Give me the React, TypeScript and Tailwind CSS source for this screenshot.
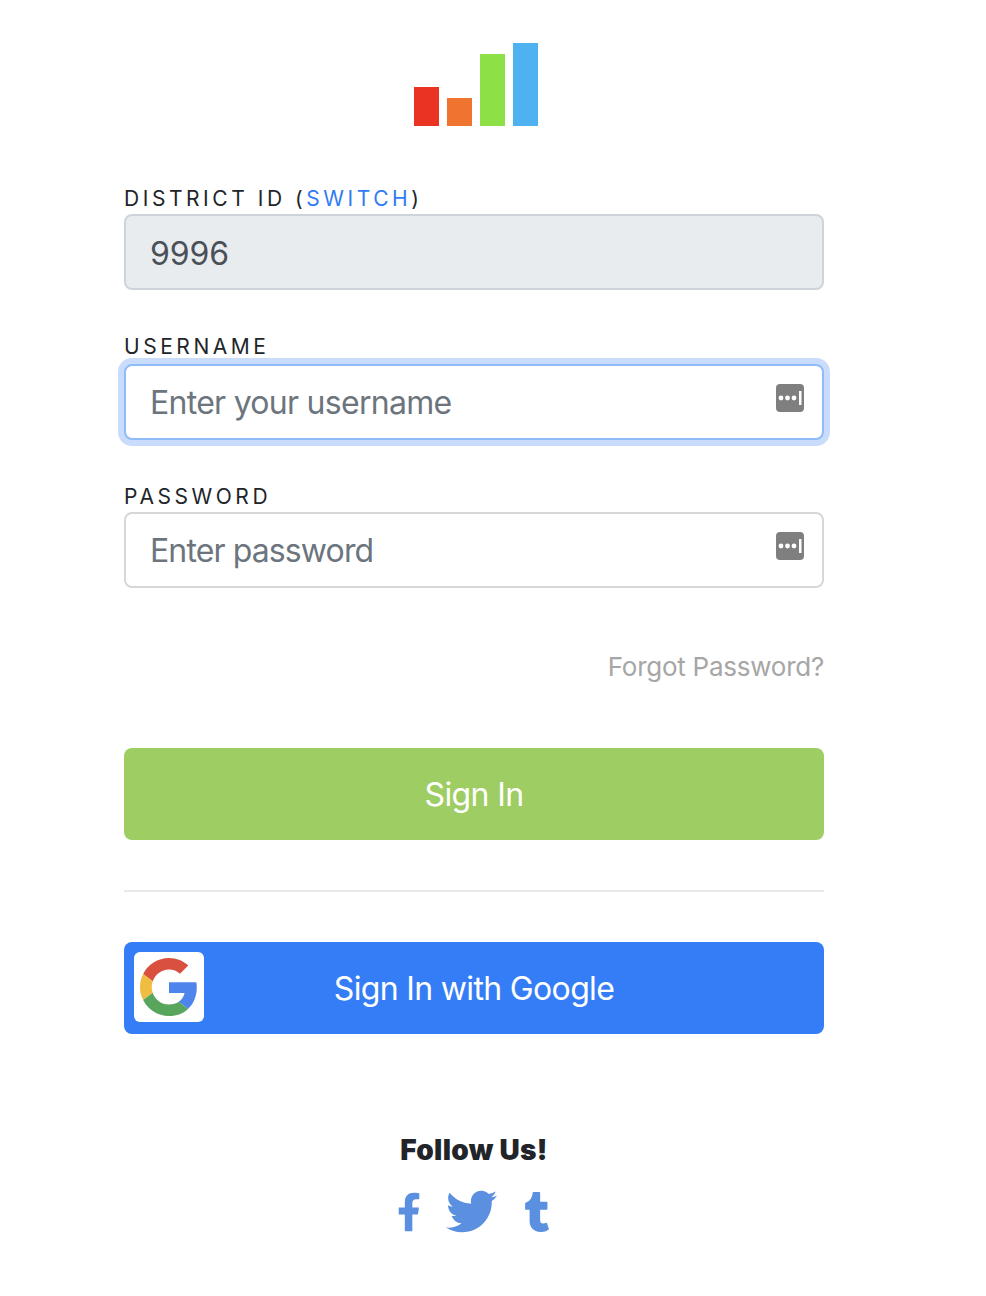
import React from "react";
import { FaFacebookF, FaTwitter, FaTumblr } from "react-icons/fa";

const font = { fontFamily: "Inter, sans-serif" };

function KeyIcon() {
  return (
    <svg width="28" height="28" viewBox="0 0 28 28" className="absolute right-[20px] top-[20px]">
      <rect width="28" height="28" rx="4" fill="#7f7f7f" />
      <circle cx="5" cy="14" r="2.4" fill="#fff" />
      <circle cx="11.500" cy="14" r="2.4" fill="#fff" />
      <circle cx="18" cy="14" r="2.4" fill="#fff" />
      <rect x="23" y="7" width="2.500" height="14" fill="#fff" />
    </svg>
  );
}

function GoogleG() {
  return (
    <svg width="58" height="58" viewBox="0 0 48 48">
      <path fill="#D9503F" d="M24 9.500c3.500 0 6.700 1.300 9.100 3.500l6.800-6.800C35.800 2.400 30.300 0 24 0 14.600 0 6.500 5.400 2.600 13.200l7.900 6.100C12.400 13.700 17.700 9.500 24 9.500z" />
      <path fill="#4F84EC" d="M47 24.500c0-1.600-.1-3.100-.4-4.500H24v9h12.900c-.6 3-2.300 5.500-4.800 7.200l7.700 6C44.300 38 47 31.800 47 24.500z" />
      <path fill="#F0BC42" d="M10.500 28.700c-.5-1.400-.8-3-.8-4.700s.3-3.300.8-4.700l-7.900-6.100C.9 16.500 0 20.100 0 24s.9 7.500 2.600 10.800l7.900-6.100z" />
      <path fill="#58A55C" d="M24 48c6.500 0 11.900-2.100 15.800-5.800l-7.700-6c-2.100 1.400-4.900 2.300-8.100 2.300-6.300 0-11.600-4.200-13.500-9.800l-7.900 6.100C6.500 42.600 14.600 48 24 48z" />
    </svg>
  );
}

const labelCls = "block text-[21px] leading-[24px] tracking-[3.55px] text-[#212529]";
const inputCls =
  "block w-full h-[76px] rounded-[8px] border-2 pl-[24px] pr-[24px] text-[32px] outline-none placeholder:text-[#6c757d]";

export default function App() {
  return (
    <div className="h-[1296px] w-[986px] bg-white overflow-hidden" style={font}>
      <div className="ml-[124px] w-[700px] flex flex-col">
        <div className="mt-[43px] h-[83px] flex items-end justify-center gap-[8px] pl-[4px] blur-[0.6px]">
          <div className="w-[25px] h-[39px] bg-[#ea3322]" />
          <div className="w-[25px] h-[28px] bg-[#ef7430]" />
          <div className="w-[25px] h-[72px] bg-[#8ee047]" />
          <div className="w-[25px] h-[83px] bg-[#4fb2f0]" />
        </div>

        <label className={`${labelCls} mt-[61px] mb-[3px]`}>
          DISTRICT ID (<span className="text-[#2f7bf6]">SWITCH</span>)
        </label>
        <input
          readOnly
          value="9996"
          className={`${inputCls} pt-[2px] tracking-[-0.1px] bg-[#e9ecef] border-[#ced4da] text-[#495057]`}
        />

        <label className={`${labelCls} mt-[45px] mb-[5px]`}>USERNAME</label>
        <div className="relative">
          <input
            placeholder="Enter your username"
            className={`${inputCls} pt-[1px] tracking-[-0.72px] bg-white border-[#8fbbf8] shadow-[0_0_0_6px_#c9dcfc]`}
          />
          <KeyIcon />
        </div>

        <label className={`${labelCls} mt-[45px] mb-[3px]`}>PASSWORD</label>
        <div className="relative">
          <input
            placeholder="Enter password"
            className={`${inputCls} pt-[1px] tracking-[-0.88px] bg-white border-[#d5d7d9]`}
          />
          <KeyIcon />
        </div>

        <div className="mt-[62px] text-right text-[26px] leading-[34px] tracking-[-0.25px] text-[#a6a6a6]">Forgot Password?</div>

        <button className="mt-[64px] h-[92px] w-full rounded-[8px] bg-[#9ecd63] pt-[2px] text-[32px] tracking-[-0.62px] text-white">Sign In</button>

        <hr className="mt-[50px] border-0 h-[2px] bg-[#e7e9ea]" />

        <button className="relative mt-[50px] h-[92px] w-full rounded-[8px] bg-[#357df6] pt-[2px] text-[32px] tracking-[-0.66px] text-white">
          <span className="absolute left-[10px] top-[10px] flex h-[70px] w-[70px] items-center justify-center rounded-[6px] bg-white">
            <GoogleG />
          </span>
          Sign In with Google
        </button>

        <div className="mt-[98px] text-center text-[28px] leading-[36px] font-black tracking-[0.3px] text-[#212529]">Follow Us!</div>
        <div className="mt-[18px] flex items-center justify-center gap-[25px] pr-[2px] text-[#5a90df]">
          <FaFacebookF size={40} className="w-[24px]" />
          <FaTwitter size={51} />
          <FaTumblr size={40} className="ml-[2px] w-[26px]" />
        </div>
      </div>
    </div>
  );
}
